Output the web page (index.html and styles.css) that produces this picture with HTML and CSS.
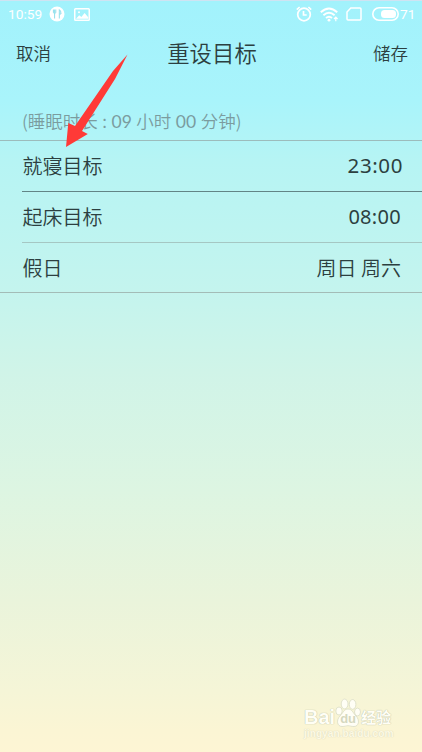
FILE: index.html
```html
<!DOCTYPE html>
<html lang="zh-CN">

<head>
    <meta charset="UTF-8">
    <meta name="viewport" content="width=device-width, initial-scale=1.0">
    <title>重设目标</title>
    <link rel="stylesheet" href="styles.css">
</head>

<body>
    <div class="page">
        <div class="status-bar">
            <div class="status-left">
                <span class="time">10:59</span>
                <svg class="icon-food" width="16" height="16" viewBox="0 0 16 16">
                    <circle cx="8" cy="8" r="7.5" fill="#fff" />
                    <path d="M4.4 3.5v2.8q0 1 1.2 1.2v5M6.8 3.5v2.8q0 1-1.2 1.2M5.6 3.5v4M10.3 12.5V3.6q1.7.8 1.7 4.4h-1.7" fill="none" stroke="#8fdfec" stroke-width="1" />
                </svg>
                <svg class="icon-image" width="16" height="13" viewBox="0 0 16 13">
                    <rect x=".75" y=".75" width="14.5" height="11.5" rx=".8" fill="none" stroke="#fff" stroke-width="1.5" />
                    <path d="M2 10.8l3.2-3.6 2.2 1.9 3.2-4.2 3.6 4.4v1.5z" fill="#fff" />
                    <circle cx="5" cy="4.2" r="1" fill="#fff" />
                </svg>
            </div>
            <div class="status-right">
                <svg class="icon-alarm" width="16" height="16" viewBox="0 0 16 16" fill="none" stroke="#fff" stroke-width="1.7">
                    <circle cx="8" cy="8.5" r="6.3" />
                    <path d="M7.5 5v4h3.2M.8 3.6L3.6 1M15.2 3.6L12.4 1" />
                </svg>
                <svg class="icon-wifi" width="19" height="15" viewBox="0 0 19 15" fill="none" stroke="#fff" stroke-width="1.9">
                    <path d="M.8 5.2q8.2-7.6 16.4 0M3.4 8.2q5.6-5 11.2 0M6 11q3-2.6 6 0" />
                    <circle cx="9" cy="13.2" r="1.4" fill="#fff" stroke="none" />
                    <path d="M15.8 14.3v-4M14 12l1.8-1.8 1.8 1.8" stroke-width="1.2" />
                </svg>
                <svg class="icon-sim" width="16" height="14" viewBox="0 0 16 14">
                    <path d="M4.8 1H14q1 0 1 1v10q0 1-1 1H2q-1 0-1-1V5z" fill="none" stroke="#fff" stroke-width="1.5" />
                </svg>
                <svg class="icon-battery" width="27" height="14" viewBox="0 0 27 14">
                    <rect x=".8" y=".8" width="25.4" height="12.4" rx="6.2" fill="none" stroke="#fff" stroke-width="1.6" />
                    <rect x="9" y="3" width="15" height="8" rx="3.5" fill="#fff" />
                </svg>
                <span class="power">71</span>
            </div>
        </div>

        <div class="nav">
            <span class="nav-btn">取消</span>
            <span class="nav-title">重设目标</span>
            <span class="nav-btn nav-save">储存</span>
        </div>

        <div class="duration">(睡眠时长 : <span class="digits">09</span> 小时 <span class="digits">00</span> 分钟)</div>

        <div class="list">
            <div class="item">
                <span>就寝目标</span>
                <span class="value num">23:00</span>
            </div>
            <div class="item">
                <span>起床目标</span>
                <span class="value num wake">08:00</span>
            </div>
            <div class="item">
                <span>假日</span>
                <span class="value">周日 周六</span>
            </div>
        </div>

        <!-- 红色箭头 -->
        <svg class="arrow" width="64" height="96" viewBox="0 0 64 96">
            <polygon points="62.5,1.5 48,18 10,73 3.3,70 1,94 22.8,81 17,78 50,26" fill="#ff3a37" />
        </svg>

        <!-- 水印 -->
        <div class="watermark">
            <div class="wm-brand">
                <span class="wm-bai">Bai</span>
                <span class="wm-paw">
                    <svg width="26" height="30" viewBox="0 0 26 30" fill="#fffef5" stroke="#d9dcc4" stroke-width=".8">
                        <ellipse cx="4" cy="13" rx="3.2" ry="4" />
                        <ellipse cx="9.6" cy="6" rx="3.4" ry="4.9" />
                        <ellipse cx="17.6" cy="6.4" rx="3.3" ry="4.9" />
                        <ellipse cx="22.5" cy="14" rx="3" ry="3.9" />
                        <path d="M13 11c4 0 5 4 8 7 4 4 3 10.500-2 10.500-3 0-4-.8-6-.8s-3 .8-6 .8c-5 0-6-6.500-2-10.500 3-3 4-7 8-7z" />
                    </svg>
                    <span class="wm-du">du</span>
                </span>
                <span class="wm-jy">经验</span>
            </div>
            <div class="wm-url">jingyan.baidu.com</div>
        </div>
    </div>
</body>

</html>
```
FILE: styles.css
```css
* {
    box-sizing: border-box;
}

body {
    margin: 0;
    font-family: "Noto Sans CJK SC", "Noto Sans", sans-serif;
    font-weight: 350;
    color: #2c3f40;
}

.page {
    position: relative;
    width: 422px;
    height: 752px;
    overflow: hidden;
    border-top: 1px solid #cfe3f2;
    background: linear-gradient(#a2f2fc 0, #a9f4fb 100px, #b6f4f4 160px, #c4f4ee 290px, #d0f4e8 370px, #ddf5e2 490px, #eaf4db 600px, #f5f5d7 690px, #fbf5d4 730px, #fdf5d4 752px);
}

.status-bar {
    display: flex;
    justify-content: space-between;
    height: 26px;
    padding: 0 7px 0 8px;
    color: #fff;
    font-family: Roboto, sans-serif;
    font-size: 13.7px;
    font-weight: 400;
}

.status-left,
.status-right {
    display: flex;
    align-items: center;
}

.icon-food {
    margin-left: 7px;
}

.icon-image {
    margin-left: 9px;
}

.icon-wifi {
    margin-left: 8px;
}

.icon-sim {
    margin-left: 7px;
}

.icon-battery {
    margin-left: 10px;
}

.power {
    width: 15px;
    margin-left: 1px;
}

.nav {
    display: grid;
    grid-template-columns: 1fr auto 1fr;
    align-items: center;
    height: 50px;
    padding: 0 14px 0 16px;
}

.nav-btn {
    font-size: 17.5px;
}

.nav-title {
    font-size: 22.4px;
}

.nav-save {
    text-align: right;
}

.duration {
    height: 63px;
    padding: 30px 0 0 22px;
    font-size: 17.5px;
    line-height: 28px;
    color: #7b9c9f;
    white-space: nowrap;
    word-spacing: .6px;
}

.digits {
    font-family: Lato, sans-serif;
    font-weight: 400;
}

.list {
    height: 153px;
    padding-left: 22px;
    border-top: 1px solid #9cbcbc;
    border-bottom: 1px solid #a3bcb7;
}

.item {
    display: flex;
    align-items: center;
    justify-content: space-between;
    height: 51px;
    padding: 0 21px 2px .5px;
    border-bottom: 1px solid #a5c7c3;
    font-size: 20px;
}

.item:first-child {
    border-bottom-color: #628486;
}

.item:last-child {
    height: 49px;
    padding-bottom: 1px;
    border-bottom: none;
}

.num {
    margin-right: -2px;
    font-family: "Noto Sans", sans-serif;
    font-size: 20.5px;
    font-weight: 400;
    letter-spacing: .6px;
}

.wake {
    margin-right: 0;
    font-size: 20px;
    letter-spacing: .3px;
}

.arrow {
    position: absolute;
    left: 65px;
    top: 52px;
}

.watermark {
    position: absolute;
    left: 304px;
    top: 695px;
    color: #fffef5;
    font-family: "Liberation Sans", "Noto Sans CJK SC", sans-serif;
    font-weight: 700;
    text-shadow: 0 0 1px #b9bea4, 0 0 1px #c9cdb6;
}

.wm-brand {
    display: flex;
    align-items: flex-end;
    height: 32px;
}

.wm-bai {
    font-size: 20px;
    line-height: 22px;
}

.wm-paw {
    position: relative;
    width: 26px;
    height: 30px;
}

.wm-du {
    position: absolute;
    left: 5px;
    top: 13px;
    color: #d5d8bf;
    font-size: 13px;
    line-height: 15px;
    text-shadow: none;
}

.wm-jy {
    font-size: 15px;
    line-height: 21px;
}

.wm-url {
    font-size: 10.2px;
    line-height: 12px;
    opacity: .5;
}
```
